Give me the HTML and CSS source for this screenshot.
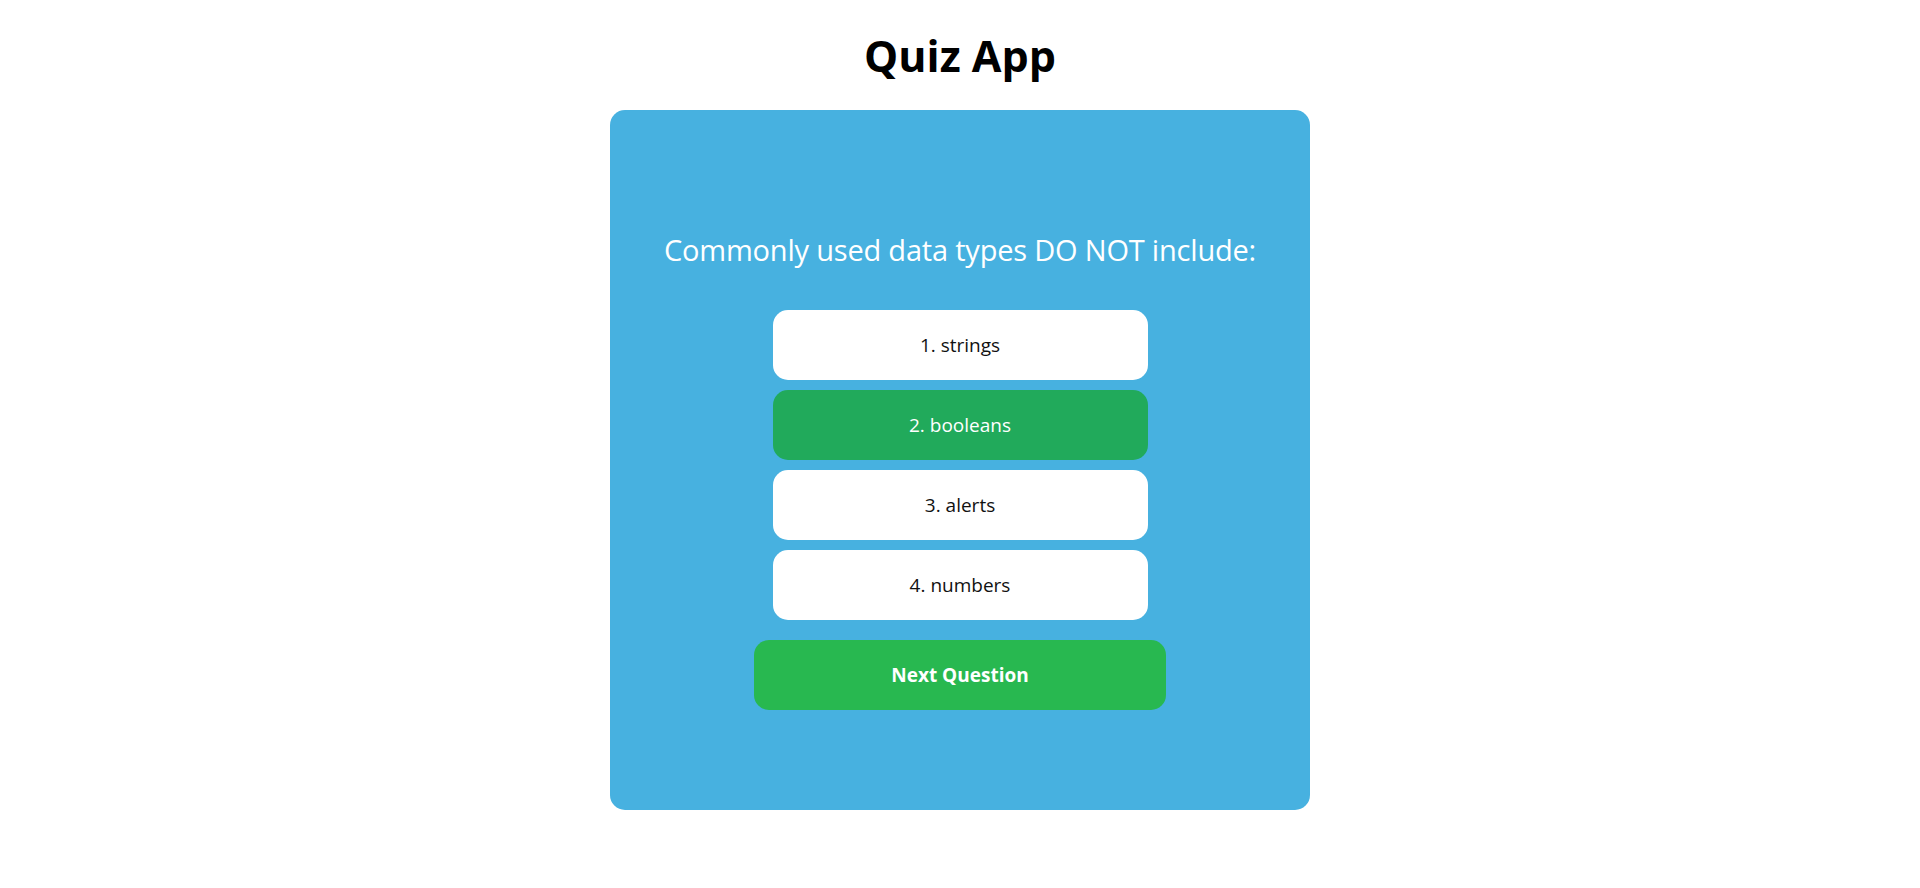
FILE: index.html
```html
<!DOCTYPE html>
<html lang="en">
<head>
<meta charset="utf-8">
<title>Quiz App</title>
<link rel="stylesheet" href="styles.css">
</head>
<body>
<h1 class="title">Quiz App</h1>
<main class="card">
  <h2 class="question">Commonly used data types DO NOT include:</h2>
  <div class="options">
    <button class="option">1. strings</button>
    <button class="option option-selected">2. booleans</button>
    <button class="option">3. alerts</button>
    <button class="option">4. numbers</button>
  </div>
  <button class="next">Next Question</button>
</main>
</body>
</html>
```
FILE: styles.css
```css
* { box-sizing: border-box; }
html, body { margin: 0; padding: 0; background: #ffffff; }
body {
  font-family: "Open Sans", "Noto Sans", sans-serif;
  color: #000;
}
.title {
  margin: 0;
  padding-top: 28px;
  height: 110px;
  font-size: 43px;
  line-height: 56px;
  font-weight: 700;
  text-align: center;
}
.card {
  width: 700px;
  height: 700px;
  margin: 0 auto;
  background: #47b1e0;
  border-radius: 15px;
  display: flex;
  flex-direction: column;
  align-items: center;
  padding-top: 120px;
}
.question {
  margin: 0;
  color: #ffffff;
  font-size: 29px;
  font-weight: 400;
  line-height: 40px;
  height: 80px;
  letter-spacing: -0.2px;
}
.options {
  display: flex;
  flex-direction: column;
  gap: 10px;
  width: 375px;
}
.option {
  height: 70px;
  border: none;
  border-radius: 15px;
  background: #ffffff;
  color: #111;
  font-family: inherit;
  font-size: 19px;
  cursor: pointer;
}
.option-selected {
  background: #21aa5b;
  color: #ffffff;
}
.next {
  margin-top: 20px;
  width: 412px;
  height: 70px;
  border: none;
  border-radius: 15px;
  background: #28b850;
  color: #ffffff;
  font-family: inherit;
  font-size: 19px;
  font-weight: 700;
  cursor: pointer;
}
```
